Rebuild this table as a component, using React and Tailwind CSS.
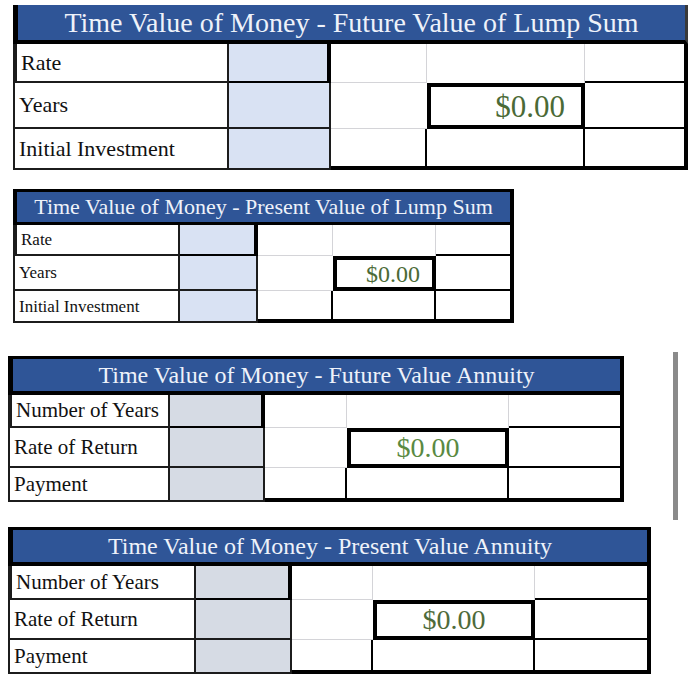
import React from "react";

const serif = { fontFamily: '"Liberation Serif", "Times New Roman", serif' };

const tables = [
  {
    title: "Time Value of Money - Future Value of Lump Sum",
    labels: ["Rate", "Years", "Initial Investment"],
    wrap: "ml-[13px] w-[675px]",
    cols: "grid-cols-[216px_102px_96px_158px_103px]",
    rows: "grid-rows-[39px_46px_41px]",
    header: "h-[39px] border-l-[5px] border-r-[3px] border-r-[#3a3a3a] border-b-4 text-[28px]",
    label: "text-[22px]",
    input: "bg-[#d9e2f3]",
    money: "text-[31px] justify-end pr-[16px] text-[#4b6a36]",
  },
  {
    title: "Time Value of Money - Present Value of Lump Sum",
    labels: ["Rate", "Years", "Initial Investment"],
    wrap: "ml-[13px] w-[501px] mt-[19px]",
    cols: "grid-cols-[167px_78px_75px_103px_78px]",
    rows: "grid-rows-[31px_35px_32px]",
    header: "h-[36px] border-l-4 border-t-[3px] border-r-4 border-b-[3px] text-[22px]",
    label: "text-[17px]",
    input: "bg-[#d9e2f3]",
    money: "text-[24px] justify-end pr-[12px] text-[#4b6a36]",
  },
  {
    title: "Time Value of Money - Future Value Annuity",
    labels: ["Number of Years", "Rate of Return", "Payment"],
    wrap: "w-[616px]",
    cols: "grid-cols-[162px_95px_82px_162px_115px]",
    rows: "grid-rows-[33px_40px_34px]",
    header: "h-[39px] border-l-[5px] border-t-[3px] border-r-4 border-b-4 text-[24px]",
    label: "text-[21px]",
    input: "bg-[#d6dbe4]",
    money: "text-[28px] justify-center text-[#5a8a42]",
  },
  {
    title: "Time Value of Money - Present Value Annuity",
    labels: ["Number of Years", "Rate of Return", "Payment"],
    wrap: "ml-[8px] w-[643px] mt-[7px]",
    cols: "grid-cols-[188px_96px_81px_162px_116px]",
    rows: "grid-rows-[34px_40px_34px]",
    header: "h-[39px] border-l-[5px] border-t-[3px] border-r-4 border-b-4 text-[24px]",
    label: "text-[21px]",
    input: "bg-[#d6dbe4]",
    money: "text-[28px] justify-center text-[#4f6b3a]",
  },
];

// border pattern shared by every sheet: label, input, c3, result, c5
const cellBorders = [
  [
    "border-l-4 border-b-2 border-r-2 border-[#1c1c1c]",
    "border-r-4 border-b-2 border-black",
    "border-r border-b border-[#d4d4d8]",
    "border-r border-[#d4d4d8]",
    "border-r-4 border-b-2 border-black",
  ],
  [
    "border-l-2 border-b-2 border-r-2 border-[#1c1c1c]",
    "border-r-2 border-b-2 border-[#1c1c1c]",
    "border-b border-[#d4d4d8]",
    "border-4 border-black",
    "border-r-4 border-b-2 border-black",
  ],
  [
    "border-l-2 border-b-2 border-r-2 border-[#1c1c1c]",
    "border-r-2 border-b-2 border-[#1c1c1c]",
    "border-r-2 border-b-4 border-black",
    "border-r-2 border-b-4 border-black",
    "border-r-4 border-b-4 border-black",
  ],
];

const Sheet = ({ t }) => (
  <div className={t.wrap} style={serif}>
    <div
      className={`flex items-center justify-center bg-[#2f5597] border-black text-[#eef2fa] leading-none ${t.header}`}
    >
      {t.title}
    </div>
    <div className={`grid ${t.cols} ${t.rows}`}>
      {cellBorders.map((row, r) =>
        row.map((b, c) => {
          if (c === 0)
            return (
              <div key={`${r}-${c}`} className={`flex items-center pl-[4px] text-[#111] bg-white leading-none ${t.label} ${b}`}>
                {t.labels[r]}
              </div>
            );
          if (c === 1) return <div key={`${r}-${c}`} className={`${t.input} ${b}`} />;
          if (c === 3 && r === 1)
            return (
              <div key={`${r}-${c}`} className={`flex items-center bg-white leading-none ${t.money} ${b}`}>
                $0.00
              </div>
            );
          return <div key={`${r}-${c}`} className={`bg-white ${b}`} />;
        })
      )}
    </div>
  </div>
);

export default function App() {
  return (
    <div className="w-[700px] h-[700px] bg-white pt-[5px] overflow-hidden">
      <Sheet t={tables[0]} />
      <Sheet t={tables[1]} />
      <div className="flex items-start mt-[29px] ml-[8px]">
        <div className="mt-[4px]">
          <Sheet t={tables[2]} />
        </div>
        <div className="ml-[49px] w-[5px] h-[168px] bg-[#8a8a8a]" />
      </div>
      <Sheet t={tables[3]} />
    </div>
  );
}
